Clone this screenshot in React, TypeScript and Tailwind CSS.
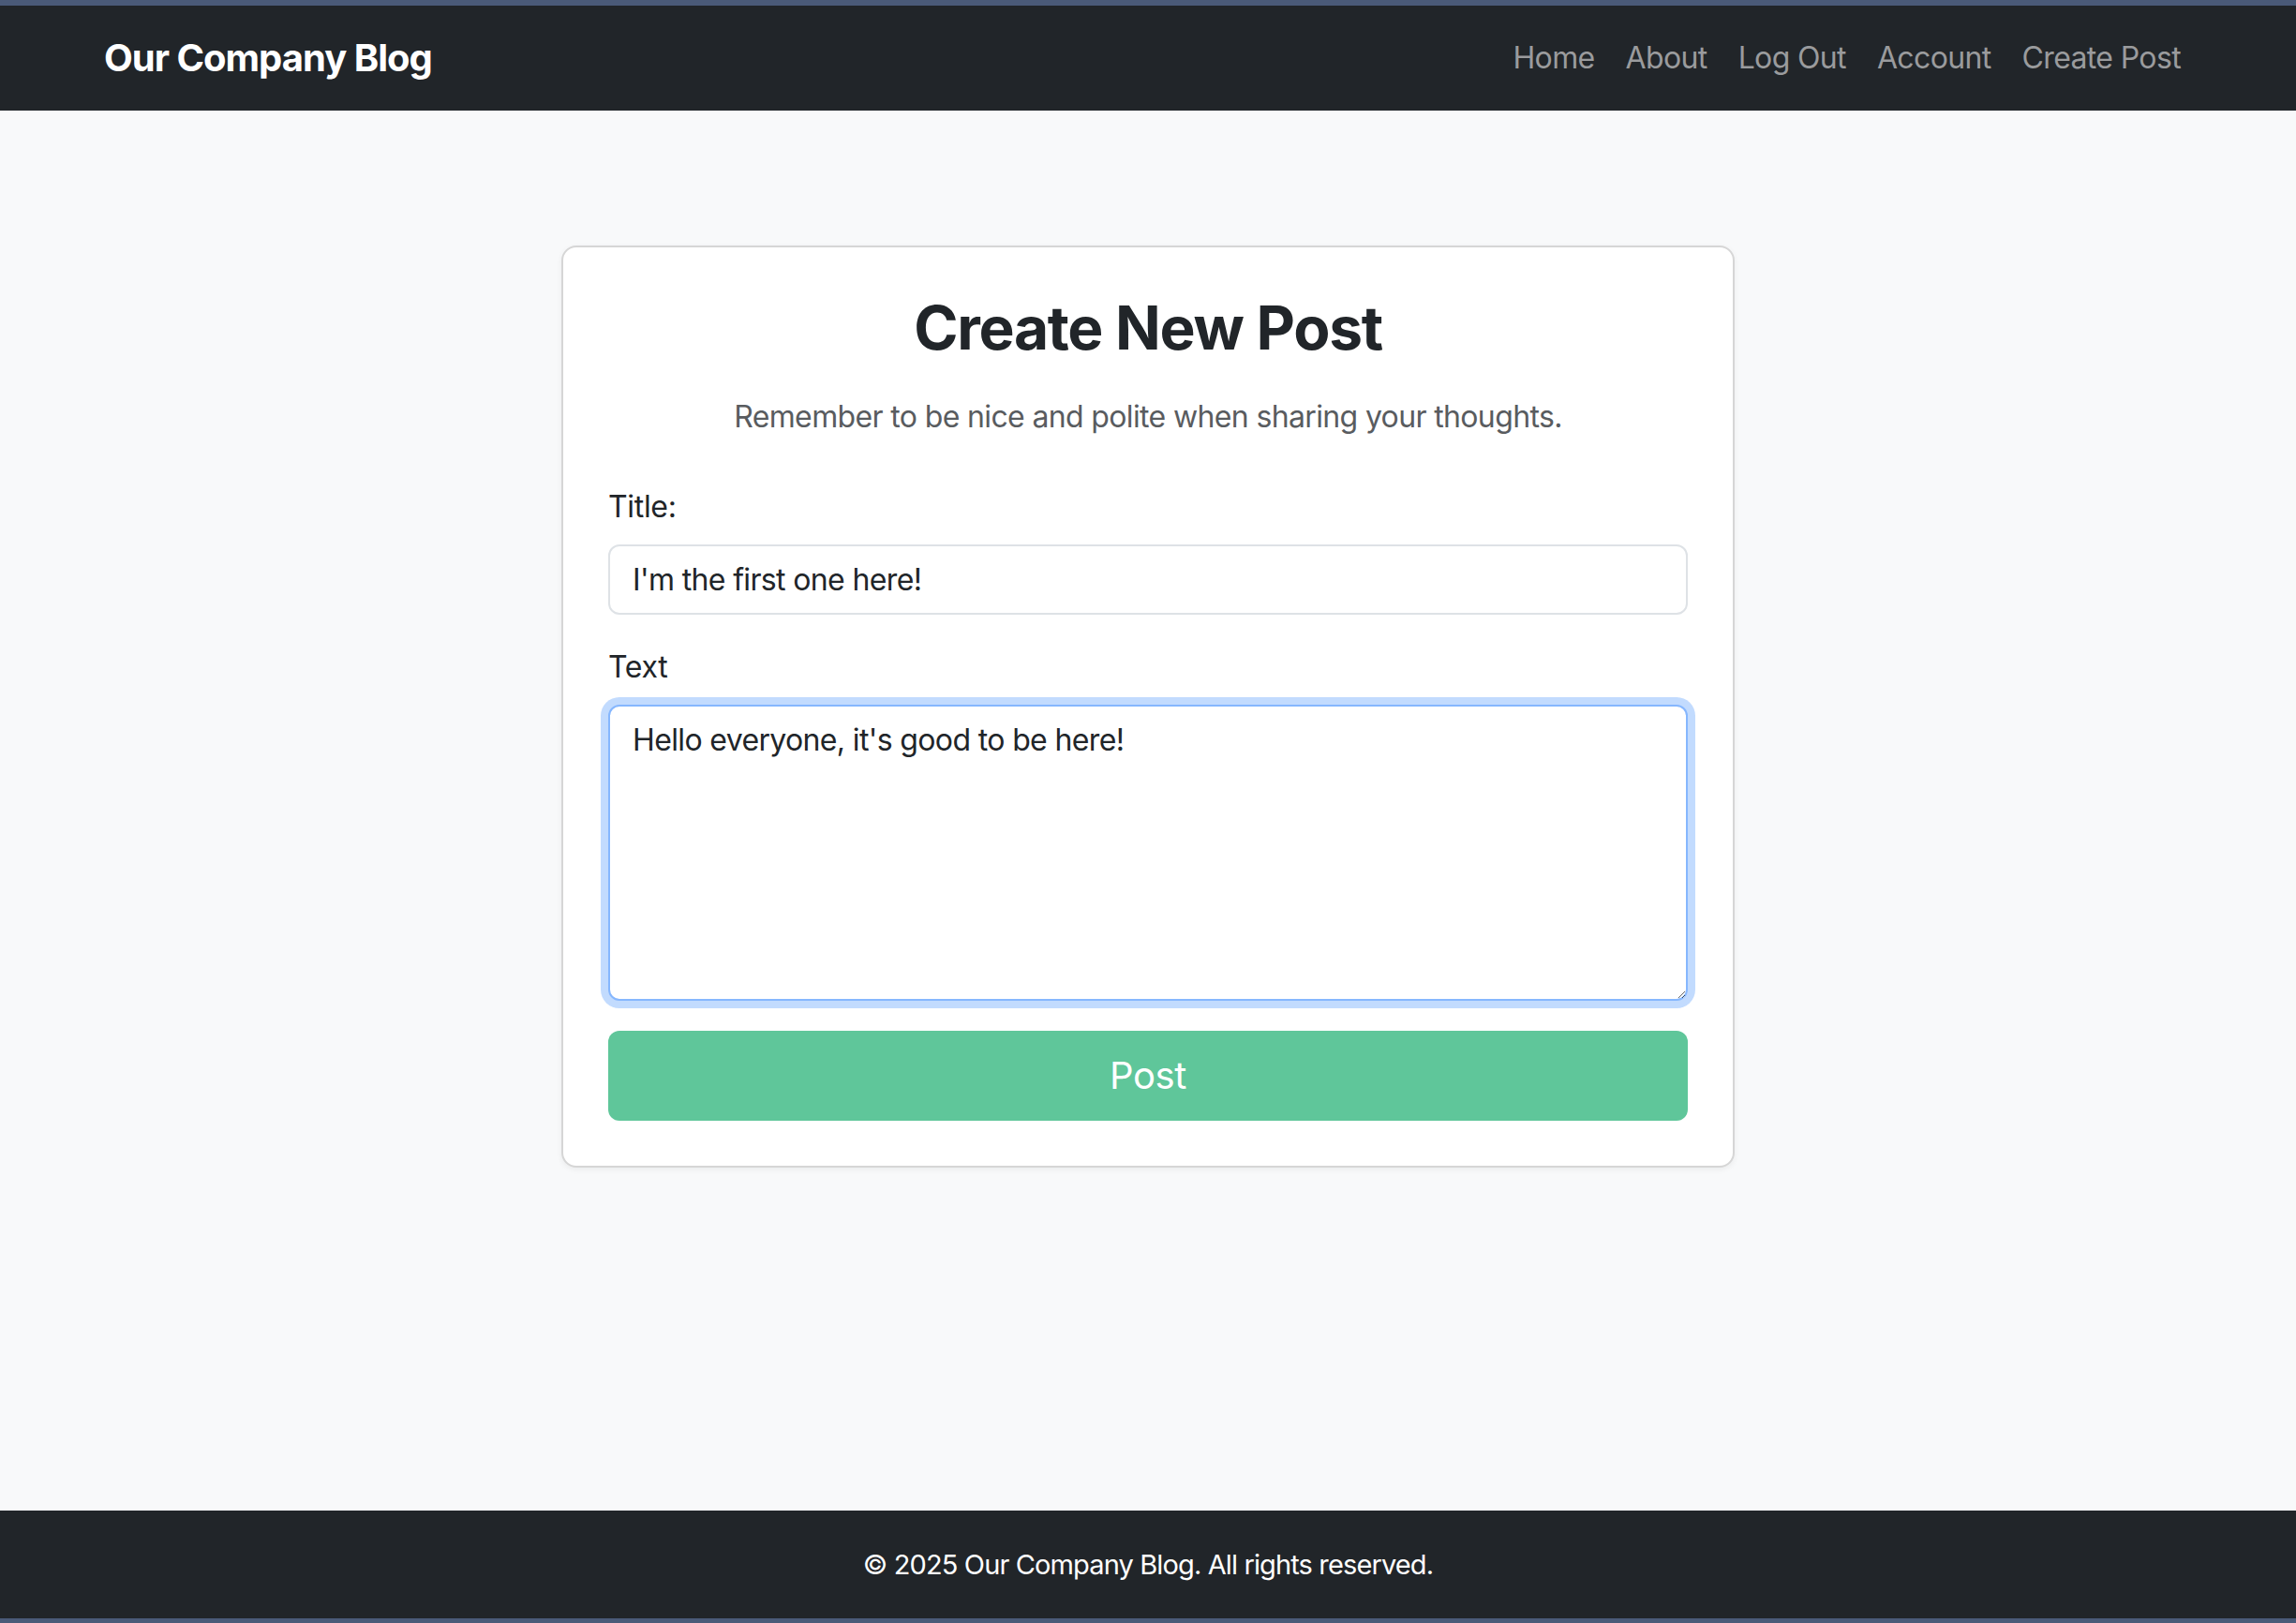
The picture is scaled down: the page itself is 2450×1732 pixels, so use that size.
import React from 'react';

const navLinks = ['Home', 'About', 'Log Out', 'Account', 'Create Post'];

const App: React.FC = () => {
  const textRef = React.useRef<HTMLTextAreaElement>(null);

  React.useEffect(() => {
    const el = textRef.current;
    if (!el) return;
    el.focus();
    const end = el.value.length;
    el.setSelectionRange(end, end);
  }, []);

  return (
    <div className="flex h-[1732px] flex-col bg-[#4a5a78] font-['Inter',sans-serif] text-[#212529]">
      {/* window edge */}
      <div className="h-[6px] shrink-0" />

      {/* Navbar */}
      <nav className="flex h-[112px] shrink-0 items-center justify-between bg-[#212529] pl-[111px] pr-[123px]">
        <a href="#" className="text-[40px] font-bold tracking-[-0.025em] text-white">
          Our Company Blog
        </a>
        <ul className="flex items-center gap-[33px]">
          {navLinks.map((link) => (
            <li key={link}>
              <a href="#" className="text-[32px] tracking-[-0.02em] text-[#9a9b9d]">
                {link}
              </a>
            </li>
          ))}
        </ul>
      </nav>

      {/* Main */}
      <main className="flex flex-1 justify-center bg-[#f8f9fa] pt-[144px]">
        <div className="h-fit w-[1252px] rounded-[16px] border-2 border-[#d6d6d6] bg-white p-[48px] shadow-[0_2px_6px_rgba(0,0,0,0.06)]">
          <h2 className="text-center text-[64px] font-bold leading-[1.2] tracking-[-0.02em]">
            Create New Post
          </h2>
          <p className="mt-[32px] text-center text-[32px] leading-[1.5] tracking-[-0.02em] text-[#595c5f]">
            Remember to be nice and polite when sharing your thoughts.
          </p>

          <form className="mt-[48px] flex flex-col tracking-[-0.02em]" onSubmit={(e) => e.preventDefault()}>
            <label htmlFor="title" className="mb-[16px] text-[32px] leading-[1.5]">
              Title:
            </label>
            <input
              id="title"
              name="title"
              defaultValue="I'm the first one here!"
              className="h-[75px] w-full rounded-[12px] border-2 border-[#dee2e6] bg-white px-[24px] text-[32px] tracking-[-0.02em] text-[#212529] outline-none"
            />

            <label htmlFor="text" className="mb-[16px] mt-[32px] text-[32px] leading-[1.5]">
              Text
            </label>
            <textarea
              id="text"
              name="text"
              ref={textRef}
              defaultValue="Hello everyone, it's good to be here!"
              className="h-[316px] w-full rounded-[12px] border-2 border-[#86b7fe] bg-white px-[24px] py-[12px] text-[32px] leading-[1.5] tracking-[-0.02em] text-[#212529] caret-black shadow-[0_0_0_8px_rgba(13,110,253,0.25)] outline-none"
            />

            <button
              type="submit"
              className="mt-[32px] h-[96px] w-full rounded-[12px] bg-[#5fc69a] text-[40px] tracking-[-0.01em] text-white"
            >
              Post
            </button>
          </form>
        </div>
      </main>

      {/* Footer */}
      <footer className="flex h-[115px] shrink-0 items-center justify-center bg-[#212529]">
        <p className="text-[29px] tracking-[-0.03em] text-white">© 2025 Our Company Blog. All rights reserved.</p>
      </footer>

      <div className="h-[5px] shrink-0" />
    </div>
  );
};

export default App;
